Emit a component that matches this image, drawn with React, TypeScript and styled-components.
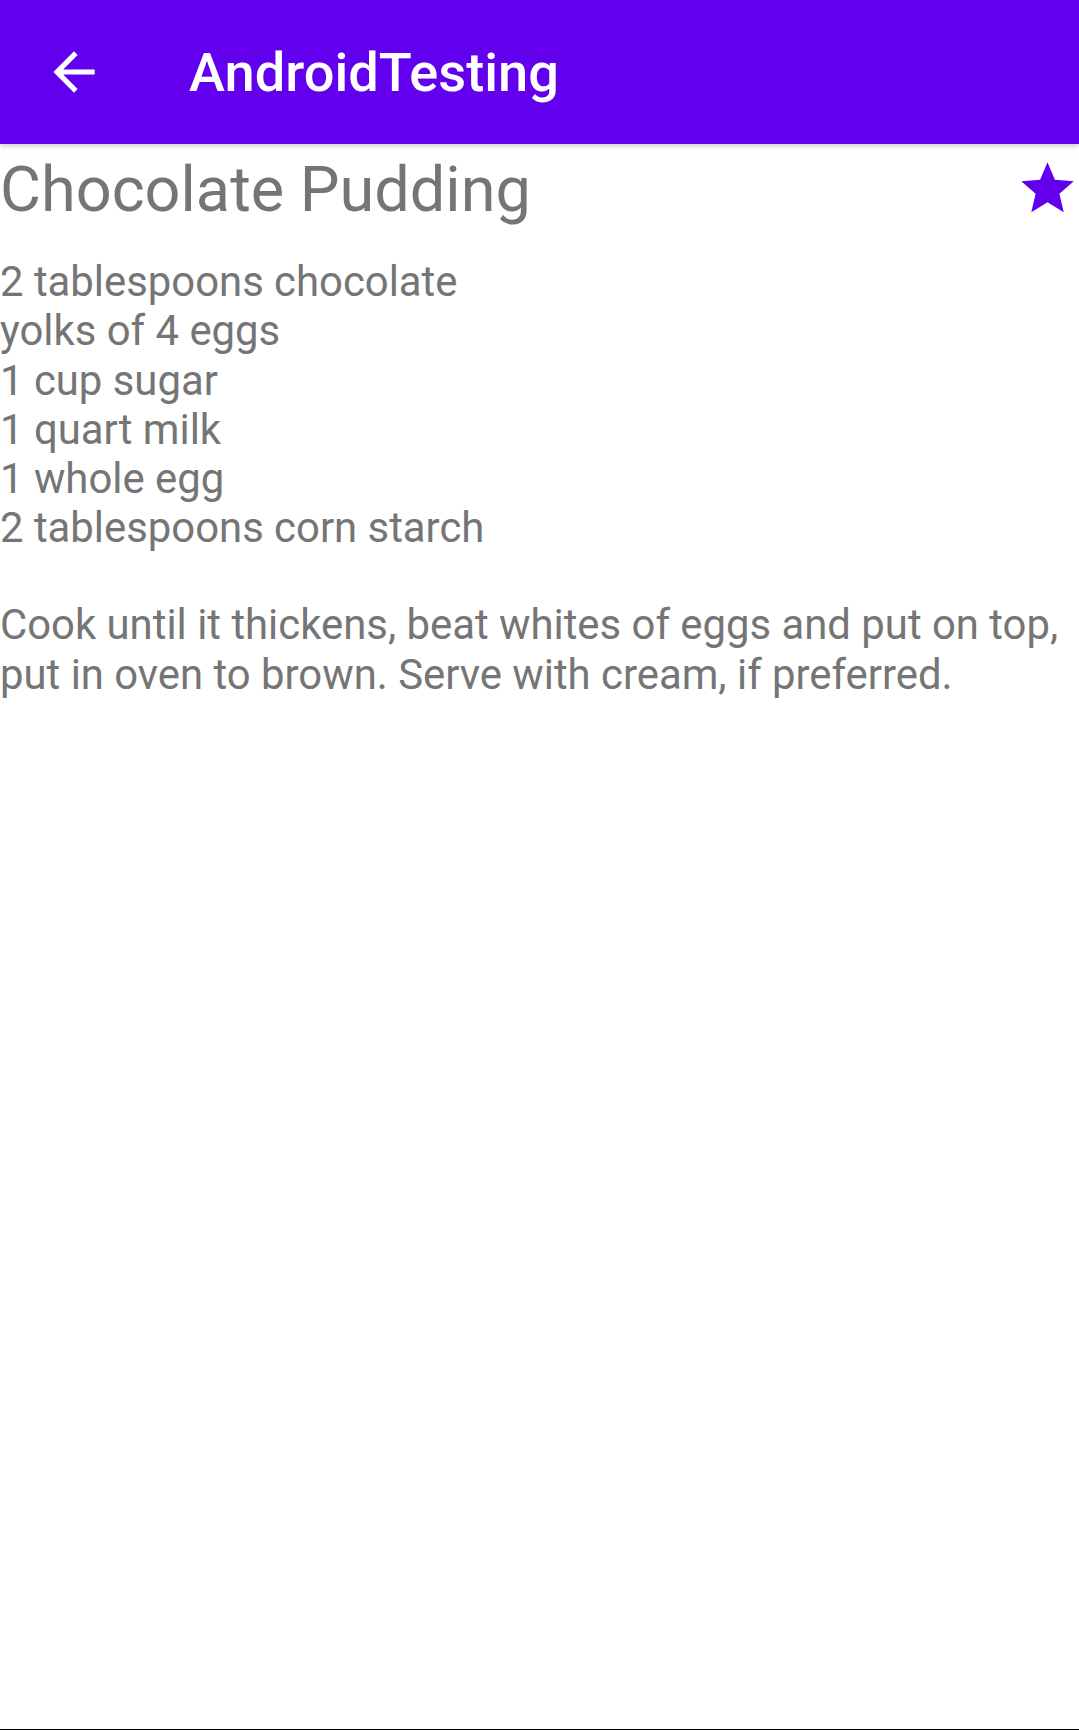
import React from "react";
import styled, { createGlobalStyle } from "styled-components";

const GlobalStyle = createGlobalStyle`
  html, body {
    margin: 0;
    padding: 0;
    background: #ffffff;
  }
  body {
    font-family: Roboto, "Noto Sans", "Liberation Sans", sans-serif;
  }
  * { box-sizing: border-box; }
`;

const Screen = styled.div`
  min-height: 100vh;
  display: flex;
  flex-direction: column;
  background: #ffffff;
`;

const AppBar = styled.header`
  position: relative;
  z-index: 1;
  height: 144px;
  flex: 0 0 auto;
  display: flex;
  align-items: center;
  background: #6200ee;
  box-shadow: 0 2px 4px rgba(0, 0, 0, 0.14), 0 4px 8px rgba(0, 0, 0, 0.06);
`;

const NavButton = styled.button`
  width: 62px;
  height: 62px;
  margin-left: 43px;
  padding: 0;
  border: none;
  background: transparent;
  display: flex;
  align-items: center;
  justify-content: center;
  color: #ffffff;
  cursor: pointer;
`;

const BarTitle = styled.h1`
  margin: 2px 0 0 84px;
  font-family: Roboto, "Noto Sans", sans-serif;
  font-weight: 500;
  font-size: 54.2px;
  line-height: 64px;
  color: #ffffff;
  letter-spacing: 0;
`;

const Content = styled.main`
  flex: 1 1 auto;
  display: flex;
  flex-direction: column;
`;

const TitleRow = styled.div`
  display: flex;
  justify-content: space-between;
  align-items: flex-start;
  padding-top: 9px;
`;

const RecipeTitle = styled.h2`
  margin: 0;
  font-family: Roboto, "Noto Sans", sans-serif;
  font-weight: 400;
  font-size: 63px;
  line-height: 74px;
  color: #757575;
`;

const StarButton = styled.button`
  width: 63px;
  height: 63px;
  margin-top: 4px;
  padding: 0;
  border: none;
  background: transparent;
  color: #6200ee;
  display: flex;
  cursor: pointer;
`;

const Body = styled.div`
  margin-top: 30px;
  font-family: Roboto, "Noto Sans", sans-serif;
  font-size: 41.85px;
  line-height: 49.3px;
  color: #757575;
`;

const IngredientList = styled.ul`
  list-style: none;
  margin: 0;
  padding: 0;
`;

const Ingredient = styled.li`
  margin: 0;
`;

const Instructions = styled.p`
  margin: 47.5px 0 0 0;
`;

const BottomEdge = styled.div`
  height: 1px;
  flex: 0 0 auto;
  background: #000000;
`;

const ingredients = [
  "2 tablespoons chocolate",
  "yolks of 4 eggs",
  "1 cup sugar",
  "1 quart milk",
  "1 whole egg",
  "2 tablespoons corn starch",
];

export default function App() {
  return (
    <>
      <GlobalStyle />
      <Screen>
        <AppBar>
          <NavButton aria-label="Navigate up">
            <svg width="62" height="62" viewBox="0 0 24 24" fill="currentColor">
              <path d="M20 11H7.83l5.59-5.59L12 4l-8 8 8 8 1.41-1.41L7.83 13H20v-2z" />
            </svg>
          </NavButton>
          <BarTitle>AndroidTesting</BarTitle>
        </AppBar>
        <Content>
          <TitleRow>
            <RecipeTitle>Chocolate Pudding</RecipeTitle>
            <StarButton aria-label="Favorite">
              <svg width="63" height="63" viewBox="0 0 24 24" fill="currentColor">
                <path d="M12 17.27L18.18 21l-1.64-7.03L22 9.24l-7.19-.61L12 2 9.19 8.63 2 9.24l5.46 4.73L5.82 21z" />
              </svg>
            </StarButton>
          </TitleRow>
          <Body>
            <IngredientList>
              {ingredients.map((item) => (
                <Ingredient key={item}>{item}</Ingredient>
              ))}
            </IngredientList>
            <Instructions>
              Cook until it thickens, beat whites of eggs and put on top, put in oven to brown. Serve with cream, if preferred.
            </Instructions>
          </Body>
        </Content>
        <BottomEdge />
      </Screen>
    </>
  );
}
